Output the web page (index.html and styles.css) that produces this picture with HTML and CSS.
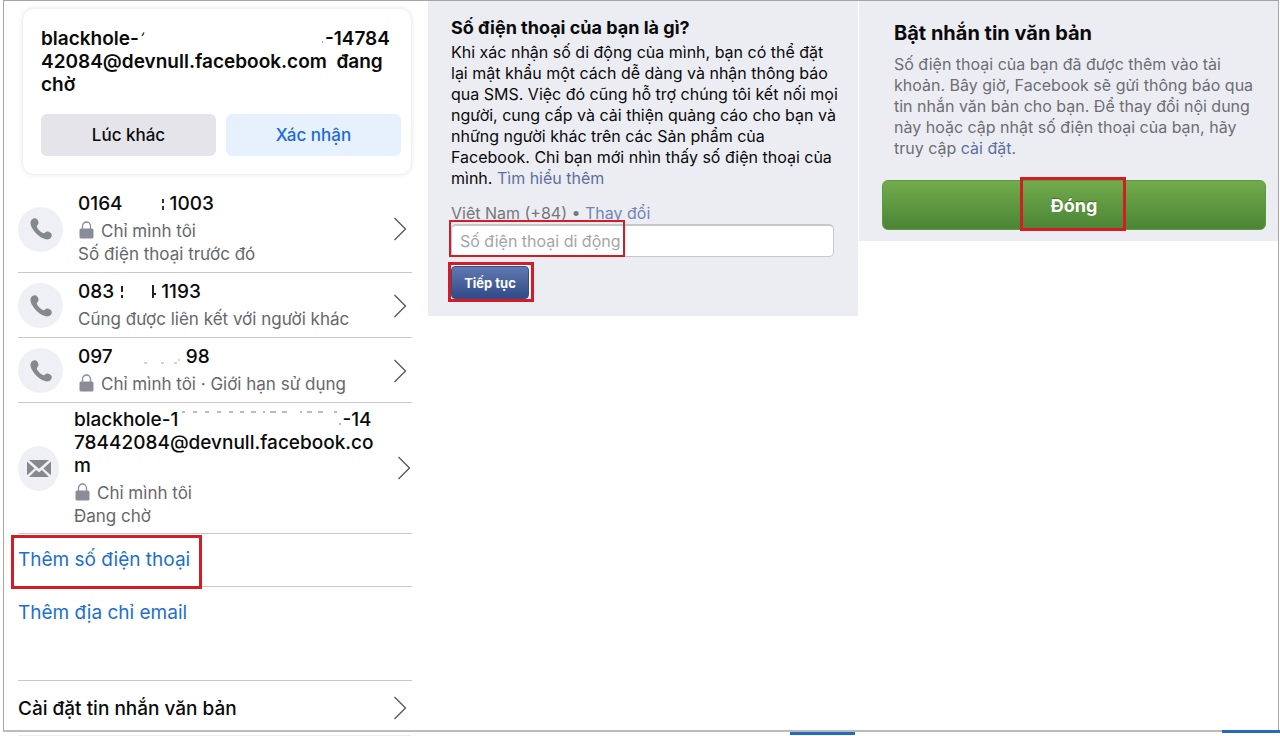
FILE: index.html
```html
<!DOCTYPE html>
<html lang="vi">
<head>
    <meta charset="UTF-8">
    <meta name="viewport" content="width=device-width, initial-scale=1.0">
    <title>Thêm số điện thoại</title>
    <link rel="stylesheet" href="styles.css">
</head>
<body>
    <svg class="defs" aria-hidden="true">
        <symbol id="phone" viewBox="0 0 22 22">
            <path d="M2.800 .8C4.400-.2 6.200 .1 7.200 1.600C8.300 3.200 8.900 4.600 8.300 5.900C7.900 6.800 6.600 7.400 6.800 8.600C7.200 10.800 11.200 14.800 13.400 15.200C14.600 15.400 15.200 14.100 16.100 13.700C17.400 13.100 18.800 13.700 20.400 14.800C21.900 15.800 22.200 17.600 21.200 19.200C19.700 21.600 16.500 22 13.500 20.600C7.500 17.800 3.700 13.500 1.300 8.500C-.1 5.500 .2 2.500 2.800 .8Z"/>
        </symbol>
        <symbol id="mail" viewBox="0 0 24 17">
            <path d="M2 0H22L12 8.800ZM0 1.500L7.600 8.500L0 15.300ZM24 1.500V15.300L16.400 8.500ZM9 9.900L12 12.300L15 9.900L22 17H2Z"/>
        </symbol>
        <symbol id="lock" viewBox="0 0 15 18">
            <path d="M3.500 8V5A4 4 0 0 1 11.500 5V8" fill="none" stroke="#8a8d99" stroke-width="1.300"/>
            <rect x="0.500" y="7.500" width="14" height="10" rx="1.500"/>
        </symbol>
        <symbol id="arrow" viewBox="0 0 14 24">
            <path d="M1.500 1L12.500 12L1.500 23" fill="none" stroke="#555" stroke-width="1.300"/>
        </symbol>
    </svg>

    <div class="frame">
        <!-- danh sách liên hệ -->
        <section class="contacts">
            <div class="card">
                <p class="card-text">blackhole-<svg class="gap gap-card" viewBox="0 0 186 23"><path d="M3 9L5 5.500" stroke="#333" stroke-width="1.500"/><rect x="183" y="14" width="1" height="2" fill="#aaa"/></svg>-14784<br>42084@devnull.facebook.com &nbsp;đang<br>chờ</p>
                <div class="card-btns">
                    <button type="button" class="btn later">Lúc khác</button>
                    <button type="button" class="btn confirm">Xác nhận</button>
                </div>
            </div>

            <ul class="list">
                <li class="item">
                    <span class="circle"><svg class="icon-phone"><use href="#phone"/></svg></span>
                    <div class="info">
                        <p class="name">0164<svg class="gap gap-a" viewBox="0 0 47 23"><path d="M40 7v4M40 14v4" stroke="#333" stroke-width="2"/></svg>1003</p>
                        <p class="note"><svg class="icon-lock"><use href="#lock"/></svg>Chỉ mình tôi</p>
                        <p class="note">Số điện thoại trước đó</p>
                    </div>
                    <svg class="arrow"><use href="#arrow"/></svg>
                </li>
                <li class="item">
                    <span class="circle"><svg class="icon-phone"><use href="#phone"/></svg></span>
                    <div class="info">
                        <p class="name">083<svg class="gap gap-a" viewBox="0 0 47 23"><path d="M8 6v6M8 15v3M39 5v13M41 13v2" stroke="#222" stroke-width="2"/></svg>1193</p>
                        <p class="note">Cũng được liên kết với người khác</p>
                    </div>
                    <svg class="arrow"><use href="#arrow"/></svg>
                </li>
                <li class="item">
                    <span class="circle"><svg class="icon-phone"><use href="#phone"/></svg></span>
                    <div class="info">
                        <p class="name">097<svg class="gap gap-b" viewBox="0 0 73 23"><path d="M31 18h3M48 18h3M61 18h3M66 14v2" stroke="#aaa" stroke-width="1"/></svg>98</p>
                        <p class="note"><svg class="icon-lock"><use href="#lock"/></svg>Chỉ mình tôi · Giới hạn sử dụng</p>
                    </div>
                    <svg class="arrow"><use href="#arrow"/></svg>
                </li>
                <li class="item email">
                    <span class="circle"><svg class="icon-mail"><use href="#mail"/></svg></span>
                    <div class="info">
                        <p class="name">blackhole-1<svg class="gap gap-email" viewBox="0 0 164 23"><path d="M4 4h3M15 4h4M27 4h4M39 4h4M51 4h4M62 4h4M73 4h5M85 4h2M92 4h6M104 4h5M122 4h2M129 4h5M140 4h5M156 4h3M162 15v2" stroke="#777" stroke-width="1"/></svg>-14<br>78442084@devnull.facebook.co<br>m</p>
                        <p class="note"><svg class="icon-lock"><use href="#lock"/></svg>Chỉ mình tôi</p>
                        <p class="note">Đang chờ</p>
                    </div>
                    <svg class="arrow"><use href="#arrow"/></svg>
                </li>
                <li class="add marked"><a href="#">Thêm số điện thoại</a><span class="mark mark-add"></span></li>
                <li class="add last"><a href="#">Thêm địa chỉ email</a></li>
                <li class="setting"><a href="#">Cài đặt tin nhắn văn bản</a><svg class="arrow"><use href="#arrow"/></svg></li>
            </ul>
        </section>

        <!-- nhập số điện thoại -->
        <section class="step">
            <form class="panel phone-form">
                <h2>Số điện thoại của bạn là gì?</h2>
                <p class="desc">Khi xác nhận số di động của mình, bạn có thể đặt<br>lại mật khẩu một cách dễ dàng và nhận thông báo<br>qua SMS. Việc đó cũng hỗ trợ chúng tôi kết nối mọi<br>người, cung cấp và cải thiện quảng cáo cho bạn và<br>những người khác trên các Sản phẩm của<br>Facebook. Chỉ bạn mới nhìn thấy số điện thoại của<br>mình. <a href="#">Tìm hiểu thêm</a></p>
                <p class="country"><label for="phoneNumber">Việt Nam (+84)</label> • <a href="#">Thay đổi</a></p>
                <div class="marked">
                    <input type="tel" id="phoneNumber" placeholder="Số điện thoại di động">
                    <span class="mark mark-input"></span>
                </div>
                <div class="marked next">
                    <button type="button" class="btn-next">Tiếp tục</button>
                    <span class="mark mark-next"></span>
                </div>
            </form>
        </section>

        <!-- hoàn tất -->
        <section class="step">
            <div class="panel done">
                <h2>Bật nhắn tin văn bản</h2>
                <p class="desc">Số điện thoại của bạn đã được thêm vào tài<br>khoản. Bây giờ, Facebook sẽ gửi thông báo qua<br>tin nhắn văn bản cho bạn. Để thay đổi nội dung<br>này hoặc cập nhật số điện thoại của bạn, hãy<br>truy cập <a href="#">cài đặt</a>.</p>
                <div class="marked close">
                    <button type="button" class="btn-close">Đóng</button>
                    <span class="mark mark-close"></span>
                </div>
            </div>
        </section>
        <span class="bar bar-mid"></span>
        <span class="bar bar-right"></span>
    </div>
    <div class="below"></div>
</body>
</html>
```
FILE: styles.css
```css
*{
    box-sizing: border-box;
}
body{
    margin: 0;
    background-color: #fff;
    font-family: Inter, "Noto Sans", sans-serif;
    color: #0a0a0a;
}
h2, p, ul{
    margin: 0;
    padding: 0;
}
ul{
    list-style: none;
}
a{
    text-decoration: none;
}
button, input{
    font-family: inherit;
}
.defs{
    position: absolute;
    width: 0;
    height: 0;
}
.frame{
    position: relative;
    display: grid;
    grid-template-columns: 424fr 431fr 419fr;
    margin: 0 1px 0 3px;
    border: 1px solid #a5a5a8;
    border-bottom: 2px solid #bbb;
}
.contacts, .step{
    min-width: 0;
}
.contacts{
    padding: 7px 16px 0 14px;
}
.card{
    margin-left: 4px;
    padding: 18px 10px 18px 18px;
    border: 1px solid #f0f0f2;
    border-radius: 12px;
    box-shadow: 0 0 4px rgba(0,0,0,0.1);
}
.card-text{
    font-size: 19px;
    line-height: 23px;
    font-weight: 600;
    white-space: nowrap;
}
.card-btns{
    display: flex;
    gap: 10px;
    margin-top: 18px;
}
.btn{
    flex: 1;
    height: 42px;
    border: none;
    border-radius: 6px;
    font-size: 17px;
    font-weight: 500;
}
.later{
    background-color: #e4e4ea;
    color: #0a0a0a;
}
.confirm{
    background-color: #e7f1fe;
    color: #1b6ad6;
}
.gap{
    height: 23px;
    vertical-align: top;
}
.gap-card{
    width: 186px;
}
.gap-a{
    width: 47px;
}
.gap-b{
    width: 73px;
}
.gap-email{
    width: 164px;
}
.list{
    margin-top: 10px;
}
.item{
    display: flex;
    align-items: center;
    gap: 15px;
    padding: 7px 0 6px;
    border-bottom: 1px solid #c9c9cc;
}
.circle{
    display: flex;
    align-items: center;
    justify-content: center;
    flex: none;
    width: 45px;
    height: 45px;
    border-radius: 50%;
    background-color: #eff0f6;
    fill: #85888d;
}
.icon-phone{
    width: 22px;
    height: 22px;
}
.icon-mail{
    width: 24px;
    height: 17px;
}
.icon-lock{
    width: 15px;
    height: 18px;
    margin: 1px 7px 0 1px;
    vertical-align: top;
    fill: #8a8d99;
}
.info{
    flex: 1;
    white-space: nowrap;
}
.name{
    margin-bottom: 5px;
    font-size: 19px;
    line-height: 23px;
    font-weight: 500;
}
.note{
    font-size: 17px;
    line-height: 23px;
    color: #65676b;
}
.arrow{
    flex: none;
    width: 14px;
    height: 24px;
    margin-right: 5px;
}
.email{
    padding: 5px 0;
}
.email .circle{
    width: 41px;
}
.email .arrow{
    margin-right: 1px;
}
.add{
    height: 53px;
    padding-top: 13px;
    border-bottom: 1px solid #c9c9cc;
    font-size: 19px;
    line-height: 26px;
}
.add a{
    color: #1b6fd0;
}
.last{
    height: 94px;
}
.setting{
    display: flex;
    align-items: center;
    justify-content: space-between;
    height: 49px;
    padding-top: 5px;
    font-size: 19px;
    font-weight: 500;
}
.setting a{
    color: #0a0a0a;
}
/* khung đỏ đánh dấu */
.marked{
    position: relative;
}
.mark{
    position: absolute;
    border: 3px solid #d41c24;
    pointer-events: none;
}
.mark-add{
    left: -7px;
    top: 1px;
    width: 191px;
    height: 54px;
}
.mark-input{
    left: -2px;
    top: -4px;
    width: 176px;
    height: 37px;
    border-width: 2px;
}
.mark-next{
    left: -3px;
    top: -4px;
    width: 86px;
    height: 40px;
}
.mark-close{
    left: 50%;
    top: -3px;
    width: 106px;
    height: 54px;
    margin-left: -54px;
}
.panel{
    background-color: #ecedf3;
}
.phone-form{
    margin-right: 1px;
    padding: 13px 24px 17px 23px;
}
.panel h2{
    font-size: 18px;
    line-height: 28px;
    font-weight: 700;
}
.desc{
    font-size: 16px;
    line-height: 21px;
    white-space: nowrap;
}
.desc a{
    color: #5b70a0;
}
.country{
    margin-top: 14px;
    font-size: 16px;
    line-height: 21px;
    color: #75777d;
}
.country a{
    color: #7186b5;
}
#phoneNumber{
    display: block;
    width: 100%;
    height: 33px;
    padding: 0 8px;
    border: 1px solid #c6c7cc;
    border-top-width: 2px;
    border-radius: 5px;
    background-color: #fff;
    font-size: 16px;
}
#phoneNumber::placeholder{
    color: #a5a5a8;
}
.next{
    margin-top: 9px;
}
.btn-next{
    display: block;
    width: 78px;
    height: 33px;
    padding: 0;
    border: 1px solid #34508c;
    border-radius: 4px;
    background: linear-gradient(#6079b0, #2f4b88);
    box-shadow: 0 0 0 1px #fff;
    color: #fff;
    font-size: 13px;
    font-weight: 700;
}
.done{
    padding: 18px 12px 11px 23px;
}
.done h2, .done .desc{
    margin-left: 12px;
}
.done h2{
    font-size: 20px;
}
.done .desc{
    margin-top: 7px;
    color: #6c6e73;
}
.close{
    margin-top: 21px;
}
.btn-close{
    display: block;
    width: 100%;
    height: 50px;
    border: 1px solid #62963f;
    border-radius: 6px;
    background: linear-gradient(#72ab4b, #4b8535);
    color: #fff;
    font-size: 18px;
    font-weight: 700;
    text-shadow: 0 -1px 1px rgba(0,0,0,0.3);
}
.bar{
    position: absolute;
    height: 3px;
    background-color: #2868bd;
}
.bar-mid{
    right: 423px;
    bottom: -5px;
    width: 65px;
}
.bar-right{
    right: -2px;
    bottom: -3px;
    width: 58px;
}
.below{
    width: 393px;
    margin: 3px 0 0 18px;
    border-top: 1px solid #eee;
}
```
